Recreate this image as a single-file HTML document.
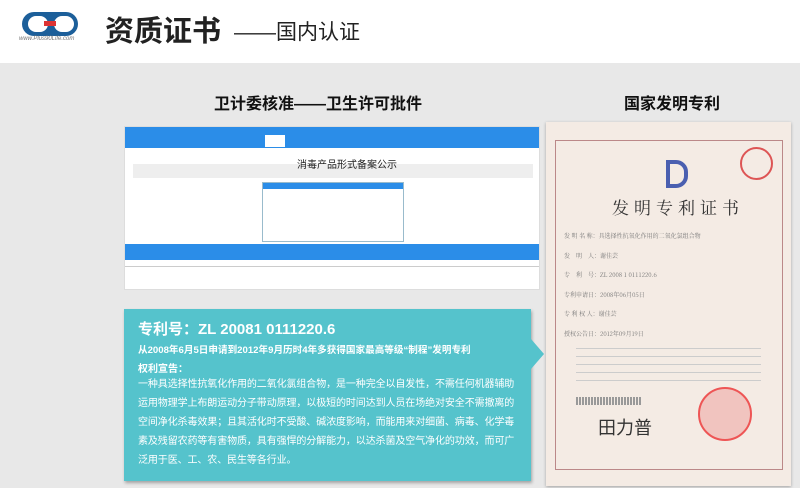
<!DOCTYPE html>
<html><head><meta charset="utf-8"><style>
*{margin:0;padding:0;box-sizing:border-box}
html,body{width:800px;height:488px;overflow:hidden}
body{background:#e8e8e8;font-family:"Liberation Sans","Noto Sans CJK SC",sans-serif;position:relative}
.hdr{position:absolute;left:0;top:0;width:800px;height:63px;background:#fff}
.abs{position:absolute}
.t{font-weight:bold;color:#111;font-size:16px}
.box{position:absolute;left:124px;top:309px;width:407px;height:172px;background:#55c3cc;color:#fff;box-shadow:1px 2px 3px rgba(0,0,0,.3);padding:9px 14px}
.box:after{content:"";position:absolute;right:-13px;top:30px;border-left:13px solid #55c3cc;border-top:15px solid transparent;border-bottom:15px solid transparent}
.p{font-size:10px;line-height:19px;letter-spacing:-.1px}
</style></head><body>
<div class="hdr">
 <div class="abs" style="left:22px;top:12px;width:56px;height:24px;border-radius:12px;background:#1c5f9a"></div>
 <div class="abs" style="left:28px;top:16px;width:20px;height:16px;border-radius:8px;background:#fff"></div>
 <div class="abs" style="left:54px;top:16px;width:20px;height:16px;border-radius:8px;background:#fff"></div>
 <div class="abs" style="left:44px;top:21px;width:12px;height:5px;background:#d33"></div>
 <div class="abs" style="left:19px;top:36px;font-size:6px;color:#777;font-style:italic">www.Plus90Life.com</div>
 <div class="abs" style="left:105px;top:8px;font-size:29px;font-weight:bold;color:#222">资质证书</div>
 <div class="abs" style="left:234px;top:16px;font-size:21px;color:#222">——国内认证</div>
</div>
<div class="abs t" style="left:214px;top:90px">卫计委核准——卫生许可批件</div>
<div class="abs t" style="left:624px;top:90px">国家发明专利</div>
<div class="abs" style="left:124px;top:126px;width:416px;height:164px;background:#fff;border:1px solid #ddd">
 <div style="height:21px;background:#2b8de8"></div>
 <div class="abs" style="left:140px;top:8px;width:20px;height:12px;background:#fff"></div>
 <div class="abs" style="left:8px;top:37px;width:400px;height:14px;background:#eee"></div>
 <div class="abs" style="left:172px;top:29px;font-size:10px;color:#222">消毒产品形式备案公示</div>
 <div class="abs" style="left:137px;top:55px;width:142px;height:60px;border:1px solid #9bc;"><div style="height:6px;background:#2b8de8"></div></div>
 <div class="abs" style="left:0;top:117px;width:414px;height:16px;background:#2b8de8"></div>
 <div class="abs" style="left:0;top:133px;width:414px;height:7px;border-bottom:1px solid #ccc"></div>
</div>
<div class="box">
 <div style="font-size:15px;font-weight:bold;margin-bottom:3px">专利号：ZL 20081 0111220.6</div>
 <div style="font-size:9.6px;font-weight:bold;margin-bottom:4px;white-space:nowrap">从2008年6月5日申请到2012年9月历时4年多获得国家最高等级“制程”发明专利</div>
 <div style="font-size:10px;font-weight:bold">权利宣告：</div>
 <div class="p">一种具选择性抗氧化作用的二氧化氯组合物，是一种完全以自发性，不需任何机器辅助运用物理学上布朗运动分子带动原理，以极短的时间达到人员在场绝对安全不需撤离的空间净化杀毒效果；且其活化时不受酸、碱浓度影响，而能用来对细菌、病毒、化学毒素及残留农药等有害物质，具有强悍的分解能力，以达杀菌及空气净化的功效，而可广泛用于医、工、农、民生等各行业。</div>
</div>
<div class="abs" style="left:546px;top:122px;width:245px;height:364px;background:#f4ebe4;box-shadow:0 1px 3px rgba(0,0,0,.3)">
 <div class="abs" style="left:9px;top:18px;width:228px;height:330px;border:1px solid #b88"></div>
 <div class="abs" style="left:194px;top:25px;width:33px;height:33px;border:2px solid #d55;border-radius:50%"></div>
 <div class="abs" style="left:120px;top:38px;width:22px;height:28px;border:4px solid #4a5fb0;border-radius:0 12px 12px 0"></div>
 <div class="abs" style="left:66px;top:72px;font-family:'Noto Serif CJK SC',serif;font-size:17px;letter-spacing:5px;color:#333">发明专利证书</div>
 <div class="abs" style="left:18px;top:104px;font-size:6px;line-height:19.5px;color:#777;font-family:'Noto Serif CJK SC',serif">发 明 名 称：具选择性抗氧化作用的二氧化氯组合物<br>发　明　人：谢佳芸<br>专　利　号：ZL 2008 1 0111220.6<br>专利申请日：2008年06月05日<br>专 利 权 人：谢佳芸<br>授权公告日：2012年09月19日</div>
 <div class="abs" style="left:30px;top:222px;width:185px;height:40px;background:repeating-linear-gradient(#f4ebe4 0 4px,#ccc 4px 5px,#f4ebe4 5px 8px)"></div>
 <div class="abs" style="left:30px;top:275px;width:65px;height:8px;background:repeating-linear-gradient(90deg,#999 0 2px,#f4ebe4 2px 3px)"></div>
 <div class="abs" style="left:152px;top:265px;width:54px;height:54px;border:2px solid #e55;border-radius:50%;background:rgba(230,80,80,.25)"></div>
 <div class="abs" style="left:52px;top:292px;font-size:18px;color:#333">田力普</div>
</div>
</body></html>
